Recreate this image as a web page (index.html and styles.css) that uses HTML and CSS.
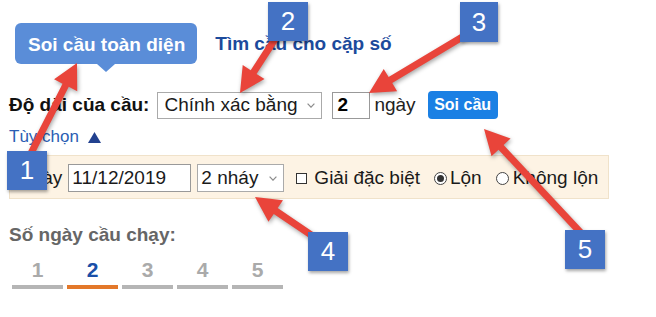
FILE: index.html
```html
<!DOCTYPE html>
<html lang="vi">
<head>
<meta charset="utf-8">
<title>Soi cầu</title>
<link rel="stylesheet" href="styles.css">
</head>
<body>
<main class="page">
  <nav class="modes">
    <a class="mode mode-active">Soi cầu toàn diện</a>
    <a class="mode">Tìm cầu cho cặp số</a>
  </nav>
  <div class="query">
    <span class="query-label">Độ dài của cầu:</span>
    <span class="control select select-len">Chính xác bằng <svg class="chev" width="8" height="5" viewBox="0 0 8 5"><polyline points="0.6,0.6 4,4.2 7.4,0.6"/></svg></span>
    <span class="control input input-num">2</span>
    <span class="unit">ngày</span>
    <button class="go" type="button">Soi cầu</button>
  </div>
  <a class="toggle">Tùy chọn <svg class="tri" width="13" height="11" viewBox="0 0 13 11"><polygon points="6.5,0 13,11 0,11"/></svg></a>
  <div class="options">
    <span class="opt-label">Ngày</span>
    <span class="control input input-date">11/12/2019</span>
    <span class="control select select-nhay">2 nháy <svg class="chev" width="8" height="5" viewBox="0 0 8 5"><polyline points="0.6,0.6 4,4.2 7.4,0.6"/></svg></span>
    <span class="check"></span><span class="opt-text opt-special">Giải đặc biệt</span>
    <span class="radio radio-on"></span><span class="opt-text opt-lon">Lộn</span>
    <span class="radio"></span><span class="opt-text">Không lộn</span>
  </div>
  <h3 class="runs-title">Số ngày cầu chạy:</h3>
  <div class="runs">
    <span class="run">1</span>
    <span class="run run-active">2</span>
    <span class="run">3</span>
    <span class="run">4</span>
    <span class="run">5</span>
  </div>
</main>

<svg class="arrows" width="656" height="317" viewBox="0 0 656 317">
  <g class="arrow" transform="translate(77,63) rotate(-63)"><polygon points="-110,-3.5 -25,-3.5 -25,-13 0,0 -25,13 -25,3.5 -110,3.5"/></g>
  <g class="arrow" transform="translate(240,93) rotate(123)"><polygon points="-80,-3.5 -25,-3.5 -25,-13 0,0 -25,13 -25,3.5 -80,3.5"/></g>
  <g class="arrow" transform="translate(369,93) rotate(149)"><polygon points="-120,-3.5 -25,-3.5 -25,-13 0,0 -25,13 -25,3.5 -120,3.5"/></g>
  <g class="arrow" transform="translate(255,197) rotate(-146)"><polygon points="-85,-3.5 -25,-3.5 -25,-13 0,0 -25,13 -25,3.5 -85,3.5"/></g>
  <g class="arrow" transform="translate(484,129) rotate(-133)"><polygon points="-150,-3.5 -25,-3.5 -25,-13 0,0 -25,13 -25,3.5 -150,3.5"/></g>
</svg>

<div class="callout callout-1">1</div>
<div class="callout callout-2">2</div>
<div class="callout callout-3">3</div>
<div class="callout callout-4">4</div>
<div class="callout callout-5">5</div>
</body>
</html>
```
FILE: styles.css
```css
* { box-sizing: border-box; }
html, body { margin: 0; padding: 0; }
body {
  width: 656px;
  height: 317px;
  overflow: hidden;
  position: relative;
  background: #fff;
  font-family: "Liberation Sans", Arial, sans-serif;
  font-size: 19px;
  color: #111;
}
.page { padding: 23px 0 0 9px; }

/* mode tabs */
.modes { display: flex; align-items: center; height: 41px; }
.mode {
  font-weight: bold;
  color: #1c4a9c;
  text-decoration: none;
  line-height: 41px;
  white-space: nowrap;
}
.mode-active {
  position: relative;
  margin-left: 6px;
  margin-right: 18px;
  height: 41px;
  padding: 2px 12px 0 13px;
  line-height: 39px;
  background: #5a8dd8;
  color: #fff;
  border-radius: 6px;
}
.mode-active::after {
  content: "";
  position: absolute;
  left: 50%;
  top: 100%;
  margin-left: -9px;
  border-left: 9px solid transparent;
  border-right: 9px solid transparent;
  border-top: 8px solid #5a8dd8;
}

/* query row */
.query { display: flex; align-items: center; margin-top: 27px; height: 28px; }
.query-label { font-weight: bold; margin-right: 8px; white-space: nowrap; }
.control {
  display: flex;
  align-items: center;
  background: #fff;
  color: #1a1a1a;
  white-space: nowrap;
}
.select { border: 1px solid #aaa; justify-content: space-between; }
.input { border: 1px solid #999; }
.chev { fill: none; stroke: #8c8c8c; stroke-width: 1.2; }
.select-len { width: 165px; height: 27px; padding: 0 6px 0 6px; margin-right: 10px; }
.input-num { width: 38px; height: 27px; padding-left: 4px; font-weight: bold; color: #000; }
.unit { margin-left: 4px; color: #222; }
.go {
  margin-left: 12px;
  width: 70px;
  height: 28px;
  padding: 0;
  border: 0;
  border-radius: 4px;
  background: #1b80e4;
  color: #fff;
  font-family: inherit;
  font-size: 16px;
  font-weight: bold;
}

/* options toggle */
.toggle {
  display: flex;
  align-items: center;
  margin-top: 8px;
  height: 20px;
  font-size: 17px;
  line-height: 20px;
  color: #2a5db3;
  text-decoration: none;
}
.tri { margin-left: 9px; fill: #22418f; }

/* options panel */
.options {
  display: flex;
  align-items: center;
  width: max-content;
  margin-top: 8px;
  padding: 8px 10px 6px 8px;
  background: #fdf3e4;
  border: 1px solid #f0e2ca;
  color: #1a1a1a;
}
.opt-label { margin-right: 6px; }
.input-date { width: 123px; height: 28px; padding-left: 3px; margin-right: 6px; }
.select-nhay { width: 87px; height: 28px; padding: 0 6px 0 3px; margin-right: 12px; }
.check {
  width: 11px;
  height: 11px;
  border: 1px solid #333;
  background: #fff;
  margin-right: 7px;
}
.opt-special { margin-right: 14px; }
.radio {
  width: 13px;
  height: 13px;
  border: 1px solid #444;
  border-radius: 50%;
  background: #fff;
  margin-right: 3px;
  display: flex;
  align-items: center;
  justify-content: center;
}
.radio-on::after {
  content: "";
  width: 7px;
  height: 7px;
  border-radius: 50%;
  background: #333;
}
.opt-lon { margin-right: 14px; }
.opt-lon + .radio { margin-right: 4px; }

/* runs */
.runs-title {
  margin: 25px 0 0 0;
  font-size: 19px;
  line-height: 22px;
  font-weight: bold;
  color: #666;
}
.runs { display: flex; gap: 4px; margin: 12px 0 0 3px; }
.run {
  width: 51px;
  text-align: center;
  font-size: 21px;
  font-weight: bold;
  line-height: 24px;
  padding-bottom: 3px;
  color: #aaa;
  border-bottom: 4px solid #b5b5b5;
}
.run-active { color: #1a4fa8; border-bottom-color: #e3782a; }

/* annotation overlay */
.arrows {
  position: absolute;
  left: 0;
  top: 0;
  pointer-events: none;
  filter: drop-shadow(1px 2px 2px rgba(0, 0, 0, 0.35));
}
.arrow { fill: #e9443a; }
.callout {
  position: absolute;
  width: 40px;
  height: 39px;
  display: flex;
  align-items: center;
  justify-content: center;
  background: #4472c4;
  color: #fff;
  font-size: 26px;
  box-shadow: 1px 2px 3px rgba(0, 0, 0, 0.35);
}
.callout-1 { left: 7px; top: 151px; }
.callout-2 { left: 268px; top: 2px; }
.callout-3 { left: 460px; top: 2px; width: 38px; height: 40px; }
.callout-4 { left: 308px; top: 232px; }
.callout-5 { left: 565px; top: 230px; }
```
